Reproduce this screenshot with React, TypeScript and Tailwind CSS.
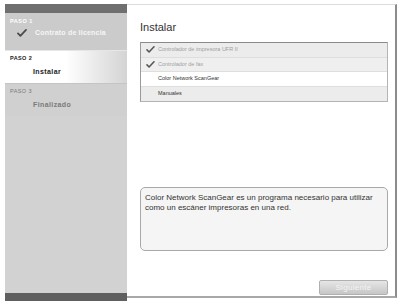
import React from 'react';

const Check: React.FC<{ className?: string }> = ({ className }) => (
  <svg viewBox="0 0 12 10" className={className}>
    <path d="M1 5.5 L4 8.5 L11 1.2" fill="none" stroke="currentColor" strokeWidth="2.2" strokeLinecap="round" strokeLinejoin="round" />
  </svg>
);

const components = [
  { name: 'Controlador de impresora UFR II', done: true, bg: 'bg-[#ececec]' },
  { name: 'Controlador de fax', done: true, bg: 'bg-[#efefef]' },
  { name: 'Color Network ScanGear', done: false, bg: 'bg-white' },
  { name: 'Manuales', done: false, bg: 'bg-[#ececec]' },
];

const Sidebar: React.FC = () => (
  <div className="w-[122px] flex flex-col bg-[#d2d2d2]">
    <div className="h-[9px] bg-[#6f6f6f]" />

    <div className="h-[37px] bg-[#cbcbcb] pl-[5px] pt-[6px]">
      <div className="text-[5.5px] font-bold tracking-[0.5px] text-white leading-none">PASO 1</div>
      <div className="flex items-center mt-[4px] pl-[7px] gap-[8px]">
        <Check className="w-[10px] h-[8px] text-[#4a4a4a]" />
        <span className="text-[7px] font-bold tracking-[0.2px] text-[#f6f6f6] leading-none">Contrato de licencia</span>
      </div>
    </div>

    <div className="h-[33px] bg-gradient-to-r from-white via-white to-[#d4d4d4] pl-[5px] pt-[5px] border-t border-[#e6e6e6]">
      <div className="text-[5.5px] font-bold tracking-[0.4px] text-[#222] leading-none">PASO 2</div>
      <div className="text-[7px] font-bold tracking-[0.4px] text-[#222] leading-none mt-[6px] pl-[23px]">Instalar</div>
    </div>

    <div className="h-[33px] bg-[#d0d0d0] pl-[5px] pt-[5px] border-t border-[#c4c4c4]">
      <div className="text-[5.5px] tracking-[0.4px] text-[#7a7a7a] leading-none">PASO 3</div>
      <div className="text-[7px] font-bold tracking-[0.4px] text-[#7a7a7a] leading-none mt-[6px] pl-[23px]">Finalizado</div>
    </div>

    <div className="flex-1" />
    <div className="h-[8px] bg-[#5f5f5f]" />
  </div>
);

export default function App() {
  return (
    <div
      className="w-[398px] h-[301px] bg-white flex pl-[5px] pt-[4px] overflow-hidden"
      style={{ fontFamily: '"Liberation Sans", Arial, sans-serif' }}
    >
      <Sidebar />

      <div className="w-[270px] h-[294px] bg-white border-t border-[#dcdcdc] border-r-[2px] border-r-[#8c8c8c] border-b-[2px] border-b-[#a8a8a8] flex flex-col pl-[13px] pr-[7px]">
        <h1 className="text-[11px] text-[#333] leading-none mt-[17px]">Instalar</h1>

        <div className="mt-[9px] border border-[#b4b4b4] border-t-[#8a8a8a] border-l-[#9a9a9a]">
          {components.map((c, i) => (
            <div
              key={c.name}
              className={`${c.bg} h-[14.5px] flex items-center ${i < 3 ? 'border-b border-[#dedede]' : ''}`}
            >
              <div className="w-[17px] flex justify-center pl-[2px]">
                {c.done && <Check className="w-[9px] h-[7px] text-[#555]" />}
              </div>
              <span className={`text-[5.5px] leading-none ${c.done ? 'text-[#a0a0a0]' : 'text-[#333]'}`}>{c.name}</span>
            </div>
          ))}
        </div>

        <div className="mt-[85px] h-[64px] rounded-[5px] border border-[#a9a9a9] bg-[#f5f5f5] px-[4px] pt-[5px]">
          <p className="text-[8px] leading-[9.5px] text-[#333]">
            Color Network ScanGear es un programa necesario para utilizar como un escáner impresoras en una red.
          </p>
        </div>

        <div className="mt-[29px] flex justify-end">
          <button className="w-[69px] h-[15px] rounded-[2px] border border-[#b0b0b0] bg-gradient-to-b from-[#e6e6e6] to-[#c6c6c6] text-[8px] text-[#f4f4f4] tracking-[0.3px] leading-none">
            Siguiente
          </button>
        </div>
      </div>
    </div>
  );
}
